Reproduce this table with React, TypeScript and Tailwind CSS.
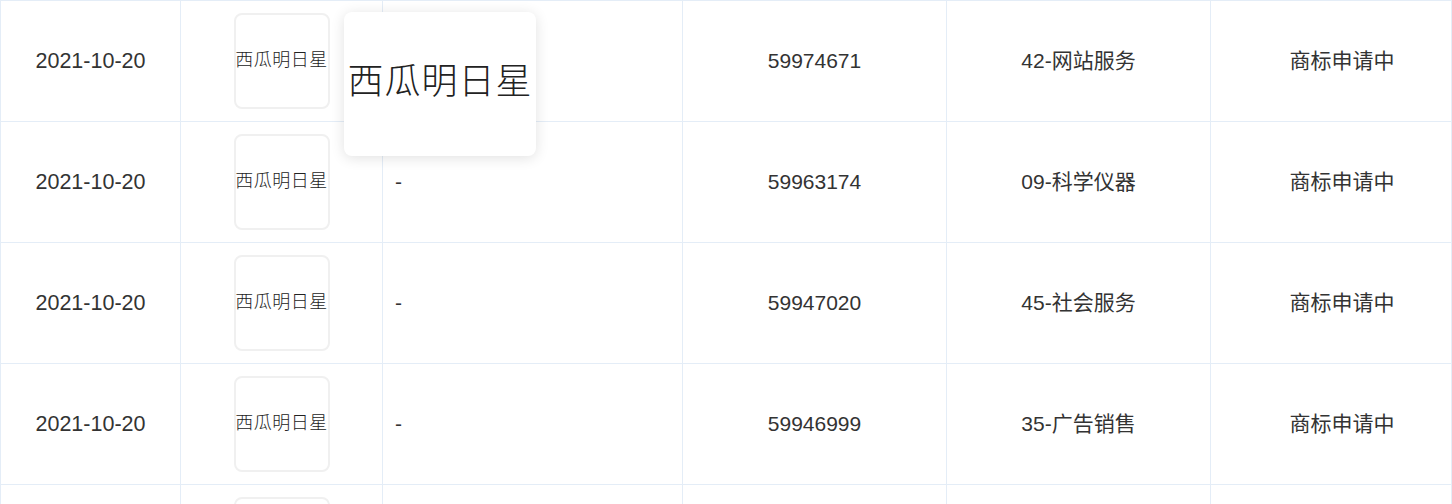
const rows = [
  { date: "2021-10-20", regNo: "59974671", category: "42-网站服务", status: "商标申请中" },
  { date: "2021-10-20", regNo: "59963174", category: "09-科学仪器", status: "商标申请中" },
  { date: "2021-10-20", regNo: "59947020", category: "45-社会服务", status: "商标申请中" },
  { date: "2021-10-20", regNo: "59946999", category: "35-广告销售", status: "商标申请中" },
  { date: "2021-10-20", regNo: "59946988", category: "41-教育娱乐", status: "商标申请中" },
];

const cell = "flex items-center border-r border-b border-[#e4edf7] h-[121px]";

function MarkImage() {
  return (
    <div className="flex h-[96px] w-[96px] items-center justify-center overflow-visible rounded-lg border-2 border-[#f0f0f0] bg-white pb-[6px]">
      <span className="whitespace-nowrap font-['Noto_Sans_CJK_SC',serif] text-[18px] font-light leading-none text-[#222] tracking-[0.5px]">
        西瓜明日星
      </span>
    </div>
  );
}

export default function App() {
  return (
    <div className="h-screen w-full overflow-hidden bg-white">
      <div className="relative font-['Liberation_Sans','Noto_Sans_CJK_SC',sans-serif] text-[21px] text-[#333]">
        <div className="grid grid-cols-[180px_202px_300px_264px_264px_1fr] border-l border-t border-[#e4edf7]">
          {rows.map((r, i) => (
            <div key={i} className="contents">
              <div className={`${cell} justify-center text-[21.5px]`}>{r.date}</div>
              <div className={`${cell} justify-center`}>
                <MarkImage />
              </div>
              <div className={`${cell} pl-3`}>{i === 0 ? "" : "-"}</div>
              <div className={`${cell} justify-center`}>{r.regNo}</div>
              <div className={`${cell} justify-center`}>{r.category}</div>
              <div className={`${cell} justify-center pl-[22px]`}>{r.status}</div>
            </div>
          ))}
        </div>

        {/* hover preview of the first mark */}
        <div className="absolute left-[344px] top-[12px] flex h-[144px] w-[192px] items-center justify-center rounded-lg bg-white pb-3 shadow-[0_2px_14px_rgba(0,0,0,0.12)]">
          <span className="whitespace-nowrap font-['Noto_Sans_CJK_SC',serif] text-[36px] font-light leading-none text-[#222] tracking-[1px]">
            西瓜明日星
          </span>
        </div>
      </div>
    </div>
  );
}
